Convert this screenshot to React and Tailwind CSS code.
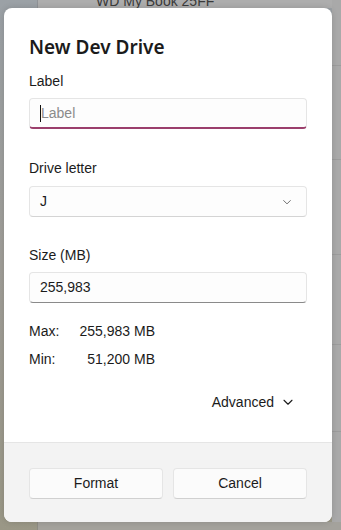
import React from 'react';

const Chevron = ({ className }) => (
  <svg className={className} viewBox="0 0 12 12" fill="none" stroke="currentColor" strokeWidth="1.1" strokeLinecap="round" strokeLinejoin="round">
    <path d="M2 4.25 6 8.25l4-4" />
  </svg>
);

const Field = ({ label, children, className = '' }) => (
  <div className={`flex flex-col ${className}`}>
    <span className="text-[14px] leading-[20px] text-[#1b1b1b]">{label}</span>
    <div className="mt-[7px]">{children}</div>
  </div>
);

export default function App() {
  return (
    <div
      className="relative w-[341px] h-[530px] overflow-hidden bg-gradient-to-b from-[#9ba1a6] via-[#a09e98] to-[#9a9786]"
      style={{ fontFamily: '"Liberation Sans", Arial, sans-serif' }}
    >
      {/* window behind the dialog */}
      <div className="absolute left-[37px] top-0 right-0 h-[8px] bg-[#adadad] border-l border-[#8f9296]">
        <span className="absolute left-[58px] top-[-9px] text-[14px] text-[#3a3a3a]">WD My Book 25FF</span>
      </div>
      <div className="absolute left-[332px] top-0 w-[9px] h-full bg-[#a9a9a9]">
        <div className="h-[66px] border-b border-[#9c9c9c]" />
        <div className="h-[94px] border-b border-[#9c9c9c]" />
        <div className="h-[95px] border-b border-[#9c9c9c]" />
        <div className="h-[90px] border-b border-[#9c9c9c]" />
        <div className="h-[87px] border-b border-[#9c9c9c]" />
      </div>
      <div className="absolute left-[37px] bottom-0 right-0 h-[8px] bg-[#a4a29c] border-l border-[#8e8c84]" />

      {/* dialog */}
      <div className="absolute left-[4px] top-[8px] w-[328px] h-[514px] rounded-[8px] bg-white overflow-hidden flex flex-col shadow-[0_0_6px_rgba(0,0,0,0.15)]">
        <div className="flex-1 px-[25px] pt-[25px]">
          <h1 className="text-[19px] leading-[28px] font-semibold text-[#1b1b1b] font-['Noto_Sans',sans-serif]">New Dev Drive</h1>

          <Field label="Label" className="mt-[10px]">
            <div className="h-[31px] rounded-[4px] bg-[#fdfdfd] border border-[#e5e5e5] border-b-2 border-b-[#9b3f6c] flex items-center px-[10px]">
              <span className="w-px h-[17px] bg-[#111]" />
              <span className="text-[14px] text-[#8b8b8b]">Label</span>
            </div>
          </Field>

          <Field label="Drive letter" className="mt-[29px]">
            <div className="mt-[1px] h-[31px] rounded-[4px] bg-[#fdfdfd] border border-[#e5e5e5] border-b-[#d4d4d4] flex items-center justify-between pl-[10px] pr-[14px]">
              <span className="text-[14px] text-[#1b1b1b]">J</span>
              <Chevron className="w-[10px] h-[10px] text-[#606060]" />
            </div>
          </Field>

          <Field label="Size (MB)" className="mt-[28px]">
            <div className="h-[31px] rounded-[4px] bg-[#fdfdfd] border border-[#e5e5e5] border-b-[#8a8a8a] flex items-center px-[10px]">
              <span className="text-[14px] text-[#1b1b1b]">255,983</span>
            </div>
          </Field>

          <div className="mt-[18px] flex flex-col gap-[8px] text-[14px] leading-[20px] text-[#1b1b1b]">
            <div className="flex justify-between w-[126px] whitespace-nowrap">
              <span>Max:</span>
              <span>255,983 MB</span>
            </div>
            <div className="flex justify-between w-[126px] whitespace-nowrap">
              <span>Min:</span>
              <span>51,200 MB</span>
            </div>
          </div>

          <div className="mt-[23px] flex justify-end pr-[13px]">
            <div className="flex items-center gap-[8px] text-[14px] leading-[20px] text-[#1b1b1b]">
              <span>Advanced</span>
              <Chevron className="w-[12px] h-[12px] text-[#1b1b1b]" />
            </div>
          </div>
        </div>

        <div className="h-[80px] bg-[#f3f3f3] border-t border-[#e5e5e5] px-[25px] pt-[25px]">
          <div className="grid grid-cols-2 gap-[10px]">
            <button className="h-[31px] rounded-[4px] bg-[#fbfbfb] border border-[#e5e5e5] border-b-[#d0d0d0] text-[14px] text-[#1b1b1b]">Format</button>
            <button className="h-[31px] rounded-[4px] bg-[#fbfbfb] border border-[#e5e5e5] border-b-[#d0d0d0] text-[14px] text-[#1b1b1b]">Cancel</button>
          </div>
        </div>
      </div>
    </div>
  );
}
